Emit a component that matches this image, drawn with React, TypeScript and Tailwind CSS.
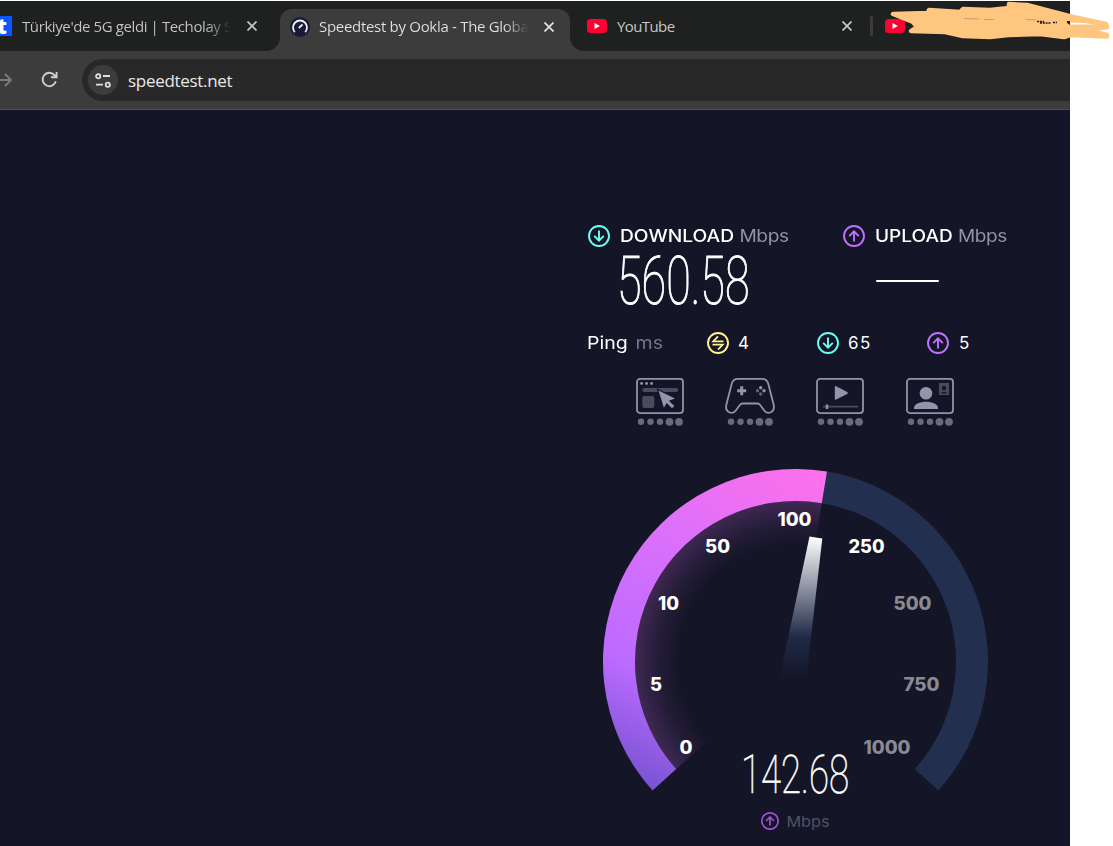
import React from "react";
import clsx from "clsx";

const GAUGE_LABELS = [
  { text: "0", x: 686, y: 747, width: 13 },
  { text: "5", x: 656, y: 684, width: 12 },
  { text: "10", x: 668.5, y: 603, width: 21 },
  { text: "50", x: 717.5, y: 546, width: 25 },
  { text: "100", x: 794.5, y: 519, width: 34 },
  { text: "250", x: 866.5, y: 546, width: 36 },
  { text: "500", x: 912.5, y: 603, width: 38, dim: true },
  { text: "750", x: 921.5, y: 684, width: 36, dim: true },
  { text: "1000", x: 887, y: 747, width: 47, dim: true },
];

function CloseIcon({ className }: { className?: string }) {
  return (
    <svg className={clsx("h-[10px] w-[10px] shrink-0", className)} viewBox="0 0 10 10" fill="none" stroke="currentColor" strokeWidth="1.7">
      <path d="M0.5 0.5 9.5 9.5M9.5 0.5 0.5 9.5" />
    </svg>
  );
}

function YoutubeIcon() {
  return (
    <svg className="h-[14px] w-5 shrink-0" viewBox="0 0 20 14">
      <rect width="20" height="14" rx="3.5" fill="#ff0033" />
      <path d="M7.5 4 12.8 7 7.5 10Z" fill="#fff" />
    </svg>
  );
}

function SpeedtestIcon() {
  return (
    <svg className="h-5 w-5 shrink-0" viewBox="0 0 20 20" fill="none" stroke="#eeeef5">
      <circle cx="10" cy="10" r="10" fill="#1b1a36" stroke="none" />
      <path d="M4.8 15.2A7 7 0 1 1 15.2 15.2" strokeWidth="1.8" />
      <path d="M8.8 11 12.5 7.5" strokeWidth="1.8" />
    </svg>
  );
}

function CircleIcon({ kind, className }: { kind: "down" | "up" | "swap"; className?: string }) {
  return (
    <svg className={clsx("h-[22px] w-[22px] shrink-0", className)} viewBox="0 0 22 22" fill="none" stroke="currentColor" strokeWidth="1.9">
      <circle cx="11" cy="11" r="10" />
      {kind === "down" && <path d="M11 5.5V15.5M6.2 10.8 11 15.6 15.8 10.8" />}
      {kind === "up" && <path d="M11 16.5V6.5M6.2 11.2 11 6.4 15.8 11.2" />}
      {kind === "swap" && <path d="M16.5 9.3H6.2L11 4.3M5.5 12.7H15.8L11 17.7" strokeWidth="1.7" />}
    </svg>
  );
}

function Dots() {
  return (
    <g fill="#6a6a7f" stroke="none">
      <circle cx="6" cy="44.8" r="3.2" />
      <circle cx="15.5" cy="44.8" r="3.2" />
      <circle cx="25" cy="44.8" r="3.2" />
      <circle cx="34.5" cy="44.8" r="3.9" />
      <circle cx="44" cy="44.8" r="3.9" />
    </g>
  );
}

function ActivityIcon({ children }: { children: React.ReactNode }) {
  return (
    <svg className="h-[50px] w-[50px]" viewBox="0 0 50 50" fill="none" stroke="#9393aa" strokeWidth="1.8">
      {children}
      <Dots />
    </svg>
  );
}

function Activities() {
  return (
    <div className="mt-[22px] ml-[48px] flex gap-[40px]">
      <ActivityIcon>
        <rect x="2" y="1.9" width="46" height="34.2" rx="3" />
        <g fill="#9393aa" stroke="none">
          <circle cx="6.6" cy="6.5" r="1.4" />
          <circle cx="11.6" cy="6.5" r="1.4" />
          <circle cx="16.6" cy="6.5" r="1.4" />
        </g>
        <rect x="7.3" y="11" width="36" height="4" rx="2" fill="#4b4b5f" stroke="none" />
        <rect x="7.3" y="19" width="12" height="12" rx="2" fill="#4b4b5f" stroke="none" />
        <path d="M23.5 13.5 40 21.5 33.9 23.7 39.3 29.1 37 31.3 31.7 26 28.9 30.7Z" fill="#9393aa" stroke="#141526" strokeWidth="2.5" paintOrder="stroke" />
      </ActivityIcon>
      <ActivityIcon>
        <path d="M13 1.9H37C40 1.9 42.3 3.5 43.2 6.5L48.6 27.5C50.5 35.5 42.5 38.2 39 33.2L35 27.8Q34 26.5 32.5 26.5H17.5Q16 26.5 15 27.8L11 33.2C7.5 38.2-.5 35.5 1.4 27.5L6.8 6.5C7.7 3.5 10 1.9 13 1.9Z" />
        <path d="M16.7 9.2V18.2M12.2 13.7H21.2" strokeWidth="3" />
        <g fill="#9393aa" stroke="none">
          <circle cx="35.7" cy="10.7" r="1.7" />
          <circle cx="39" cy="13.7" r="1.7" />
          <circle cx="32.5" cy="13.7" r="1.7" fill="#626275" />
          <circle cx="35.7" cy="17" r="1.7" fill="#626275" />
        </g>
      </ActivityIcon>
      <ActivityIcon>
        <rect x="2" y="1.9" width="46" height="34.2" rx="3" />
        <path d="M20.8 10.1 31.7 16 20.8 21.7Z" fill="#9393aa" strokeWidth="2" strokeLinejoin="round" />
        <path d="M8 29.7H43" stroke="#4b4b5f" />
        <path d="M12 27.5V32" strokeWidth="2.5" />
      </ActivityIcon>
      <ActivityIcon>
        <rect x="2" y="1.9" width="46" height="34.2" rx="3" />
        <circle cx="21" cy="16.2" r="6.3" fill="#9393aa" stroke="none" />
        <path d="M9 32C8.3 27 15 24.7 21 24.7S33.7 27 33 32Z" fill="#9393aa" stroke="none" />
        <rect x="34" y="6" width="10" height="12" fill="#4b4b5f" stroke="none" />
        <circle cx="39" cy="11" r="2.3" fill="#141526" stroke="none" />
        <path d="M35.5 16.5Q39 12.5 42.5 16.5Z" fill="#141526" stroke="none" />
      </ActivityIcon>
    </div>
  );
}

function Gauge() {
  return (
    <svg className="mt-[31px] ml-[8px] h-[388px] w-[400px]" viewBox="595 458 400 388">
      <defs>
        <linearGradient id="arc" gradientUnits="userSpaceOnUse" x1="653" y1="790" x2="825" y2="471">
          <stop offset="0" stopColor="#7953d2" />
          <stop offset="0.27" stopColor="#bb6bff" />
          <stop offset="0.65" stopColor="#dc70fb" />
          <stop offset="1" stopColor="#ff70ea" />
        </linearGradient>
        <radialGradient id="glow" gradientUnits="userSpaceOnUse" cx="795.5" cy="661.5" r="160.5">
          <stop offset="0.72" stopColor="#b860e0" stopOpacity="0" />
          <stop offset="0.85" stopColor="#b860e0" stopOpacity="0.09" />
          <stop offset="1" stopColor="#c060d4" stopOpacity="0.25" />
        </radialGradient>
        <linearGradient id="needle" x1="0" y1="0" x2="0" y2="1">
          <stop offset="0" stopColor="#fff" />
          <stop offset="0.7" stopColor="#1e2947" />
          <stop offset="1" stopColor="#141526" />
        </linearGradient>
      </defs>
      <path d="M827 471.6A192.5 192.5 0 0 1 938.5 790.4L914.7 769A160.5 160.5 0 0 0 821.8 503.2Z" fill="#222f4f" />
      <path d="M795.5 661.5 676.3 769A160.5 160.5 0 0 1 821.8 503.2Z" fill="url(#glow)" />
      <path d="M652.5 790.4A192.5 192.5 0 0 1 827 471.6L821.8 503.2A160.5 160.5 0 0 0 676.3 769Z" fill="url(#arc)" />
      <path d="M809.5 536.5 822.3 538.5 806 681 780 676Z" fill="url(#needle)" />
      <g fontFamily="Inter, sans-serif" fontWeight="800" fontSize="18.5" textAnchor="middle">
        {GAUGE_LABELS.map((label) => (
          <text
            key={label.text}
            x={label.x}
            y={label.y + 6.7}
            textLength={label.width}
            lengthAdjust="spacingAndGlyphs"
            fill={label.dim ? "#8a8a93" : "#fff"}
          >
            {label.text}
          </text>
        ))}
      </g>
      <text
        x="741"
        y="792.5"
        fontFamily="Roboto, sans-serif"
        fontWeight="100"
        fontSize="53.5"
        fill="#fff"
        stroke="#fff"
        strokeWidth="0.7"
        textLength="108"
        lengthAdjust="spacingAndGlyphs"
      >
        142.68
      </text>
      <g fill="none" stroke="#9a55d2" strokeWidth="1.7">
        <circle cx="770" cy="821" r="8.2" />
        <path d="M770 825.5V817.3M766 821 770 817 774 821" />
      </g>
      <text x="786.5" y="827" fontFamily="Inter, sans-serif" fontSize="15" fill="#535262" textLength="43" lengthAdjust="spacingAndGlyphs">
        Mbps
      </text>
    </svg>
  );
}

function Scribble() {
  return (
    <svg className="absolute top-0 left-[880px] h-[44px] w-[233px]" viewBox="880 0 233 44">
      <path
        d="M893 14 928 13 929 10 960 12 963 9 990 10 1009 8 1009 4 1027 5 1069 16 1106 24 1107 27 1095 29 1095 32 1107 35 1107 36.5 1070 35 1064 37 1040 34 1008 35 990 37 963 36 945 32 911 31 917 27 913 22 903 18Z"
        fill="#ffc680"
        stroke="#ffc680"
        strokeWidth="4.5"
        strokeLinejoin="round"
      />
      <path d="M1070 22.5 1084 23 1095 24.5 1070 24.5Z" fill="#fff" />
      <path d="M1067 21H1070V25L1067 23Z" fill="#1f2120" />
      <path d="M1037 21.5H1044M1040 23H1051M1053 22.5H1057" stroke="#1f2120" strokeWidth="1.5" strokeDasharray="2 0.8" />
      <path d="M964 18.5 979 19M984 19.5H994M1026 19.5 1036 20" stroke="#bd9468" strokeWidth="0.8" />
    </svg>
  );
}

function TabStrip() {
  return (
    <div className="flex h-[50px] bg-[#3c3c3c] font-['Open_Sans',sans-serif] text-[15px] whitespace-nowrap">
      <div className="flex w-[280px] items-center rounded-br-[14px] bg-[#1f2120]">
        <div className="flex h-5 w-3 items-center justify-end overflow-hidden bg-[#0b57ff] pr-[5px] text-[21px] leading-5 font-extrabold text-white">t</div>
        <div className="ml-[10px] w-[209px] overflow-hidden bg-linear-to-r from-[#c7c7c7] from-88% to-transparent bg-clip-text tracking-[-0.4px] text-transparent">
          Türkiye'de 5G geldi | Techolay S
        </div>
        <CloseIcon className="ml-4 text-[#c7c7c7]" />
      </div>
      <div className="bg-[#1f2120]">
        <div className="mt-2 flex h-[42px] w-[290px] items-center rounded-t-[12px] bg-[#3c3c3c] pb-[7px] pl-[10px]">
          <SpeedtestIcon />
          <div className="ml-[9px] w-[210px] overflow-hidden bg-linear-to-r from-[#e3e3e3] from-88% to-transparent bg-clip-text tracking-[-0.3px] text-transparent">
            Speedtest by Ookla - The Global
          </div>
          <CloseIcon className="ml-[15px] text-[#e3e3e3]" />
        </div>
      </div>
      <div className="flex flex-1 items-center rounded-bl-[14px] bg-[#1f2120] pl-[17px] text-[#c7c7c7]">
        <YoutubeIcon />
        <span className="ml-[10px] w-[225px] tracking-[-0.6px]">YouTube</span>
        <CloseIcon />
        <div className="mr-3 ml-[18px] h-5 w-[3px] rounded-full bg-[#3c3c3c]" />
        <YoutubeIcon />
      </div>
    </div>
  );
}

function Toolbar() {
  return (
    <div className="flex h-[59px] items-start border-b border-[#505053] bg-[#3c3c3c] pt-2">
      <svg className="mt-[13px] h-4 w-3" viewBox="0 0 12 16" fill="none" stroke="#7b7b7b" strokeWidth="1.8">
        <path d="M0 8H11M5 2 11 8 5 14" />
      </svg>
      <svg className="mt-[12px] ml-[29px] h-[17px] w-[17px]" viewBox="0 0 17 17" fill="none" stroke="#cfcfcf" strokeWidth="1.9">
        <path d="M14.8 10.2A6.7 6.7 0 1 1 13.3 4L15.5 6.2M15.6 1V6.3H10" />
      </svg>
      <div className="ml-[24px] flex h-[42px] flex-1 items-center rounded-l-full bg-[#282828] pl-[6px]">
        <div className="flex h-[30px] w-[30px] items-center justify-center rounded-full bg-[#3c3c3c]">
          <svg className="h-[15px] w-4" viewBox="0 0 16 15" fill="none" stroke="#e0e0e0" strokeWidth="1.8">
            <circle cx="3.2" cy="3.2" r="2.1" />
            <path d="M8 3H15M1 11.7H8" />
            <circle cx="12.8" cy="11.7" r="2.1" />
          </svg>
        </div>
        <span className="ml-[10px] pt-0.5 font-['Open_Sans',sans-serif] text-[17px] tracking-[-0.3px] text-[#e8e8e8]">speedtest.net</span>
      </div>
    </div>
  );
}

function Results() {
  return (
    <div className="ml-[587px] pt-[114px] font-['Inter',sans-serif] text-[17px] leading-6 whitespace-nowrap text-white">
      <div className="flex h-6 items-center">
        <CircleIcon kind="down" className="ml-px text-[#6afff3]" />
        <div className="ml-[10px] w-[223px]">
          <div className="w-fit origin-left scale-x-[1.13]">
            <span className="font-medium">DOWNLOAD</span> <span className="tracking-[-0.4px] text-[#9193a8]">Mbps</span>
          </div>
        </div>
        <CircleIcon kind="up" className="text-[#bf71ff]" />
        <div className="ml-[10px] w-fit origin-left scale-x-[1.12]">
          <span className="font-medium">UPLOAD</span> <span className="tracking-[-0.4px] text-[#9193a8]">Mbps</span>
        </div>
      </div>
      <div className="flex h-[64px] items-center">
        <div className="ml-[30px] w-[259px] pt-[4px]">
          <div className="w-fit origin-left scale-x-[0.68] font-['Roboto',sans-serif] text-[66px] leading-[64px] font-thin [-webkit-text-stroke:1.1px_white]">560.58</div>
        </div>
        <div className="mt-[2px] h-[2px] w-[63px] rounded-full bg-white" />
      </div>
      <div className="mt-[19px] flex h-6 items-center">
        <div className="w-[120px]">
          <div className="w-fit origin-left scale-x-[1.15]">
            Ping <span className="ml-[2px] text-[#75768b]">ms</span>
          </div>
        </div>
        <CircleIcon kind="swap" className="text-[#fff38e]" />
        <span className="ml-[9px] w-[79px]">4</span>
        <CircleIcon kind="down" className="text-[#6afff3]" />
        <span className="ml-[9px] w-[79px] tracking-[1.5px]">65</span>
        <CircleIcon kind="up" className="text-[#bf71ff]" />
        <span className="ml-[10px]">5</span>
      </div>
      <Activities />
      <Gauge />
    </div>
  );
}

export default function App() {
  return (
    <div className="relative h-[846px] w-[1113px] overflow-hidden bg-white pt-px">
      <div className="h-[845px] w-[1070px] overflow-hidden bg-[#141526]">
        <TabStrip />
        <Toolbar />
        <Results />
      </div>
      <Scribble />
    </div>
  );
}
